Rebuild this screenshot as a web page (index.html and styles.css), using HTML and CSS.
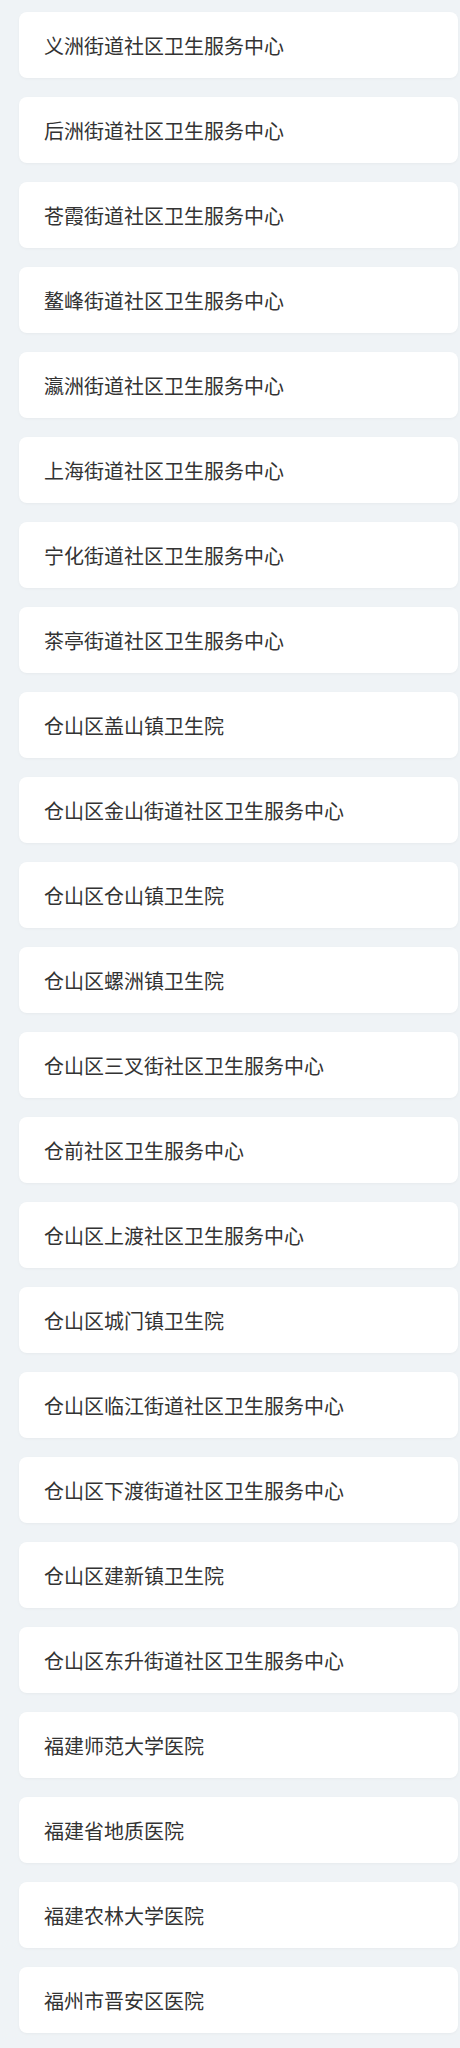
FILE: index.html
```html
<!DOCTYPE html>
<html lang="zh-CN">
<head>
<meta charset="utf-8">
<link rel="stylesheet" href="styles.css">
</head>
<body>
<ul class="list">
<li class="card">义洲街道社区卫生服务中心</li>
<li class="card">后洲街道社区卫生服务中心</li>
<li class="card">苍霞街道社区卫生服务中心</li>
<li class="card">鳌峰街道社区卫生服务中心</li>
<li class="card">瀛洲街道社区卫生服务中心</li>
<li class="card">上海街道社区卫生服务中心</li>
<li class="card">宁化街道社区卫生服务中心</li>
<li class="card">茶亭街道社区卫生服务中心</li>
<li class="card">仓山区盖山镇卫生院</li>
<li class="card">仓山区金山街道社区卫生服务中心</li>
<li class="card">仓山区仓山镇卫生院</li>
<li class="card">仓山区螺洲镇卫生院</li>
<li class="card">仓山区三叉街社区卫生服务中心</li>
<li class="card">仓前社区卫生服务中心</li>
<li class="card">仓山区上渡社区卫生服务中心</li>
<li class="card">仓山区城门镇卫生院</li>
<li class="card">仓山区临江街道社区卫生服务中心</li>
<li class="card">仓山区下渡街道社区卫生服务中心</li>
<li class="card">仓山区建新镇卫生院</li>
<li class="card">仓山区东升街道社区卫生服务中心</li>
<li class="card">福建师范大学医院</li>
<li class="card">福建省地质医院</li>
<li class="card">福建农林大学医院</li>
<li class="card">福州市晋安区医院</li>
</ul>
</body>
</html>
```
FILE: styles.css
```css
html, body {
  margin: 0;
  padding: 0;
  background: #eff3f6;
}
body {
  font-family: "Noto Sans CJK SC", "Noto Sans", sans-serif;
}
.list {
  list-style: none;
  margin: 0;
  padding: 12px 2px 12px 19px;
  display: flex;
  flex-direction: column;
  gap: 19px;
}
.card {
  height: 66px;
  box-sizing: border-box;
  background: #ffffff;
  border-radius: 8px;
  box-shadow: 0 1px 3px rgba(0, 0, 0, 0.04);
  padding: 0 25px;
  display: flex;
  align-items: center;
  font-size: 20px;
  color: #333333;
}
```
